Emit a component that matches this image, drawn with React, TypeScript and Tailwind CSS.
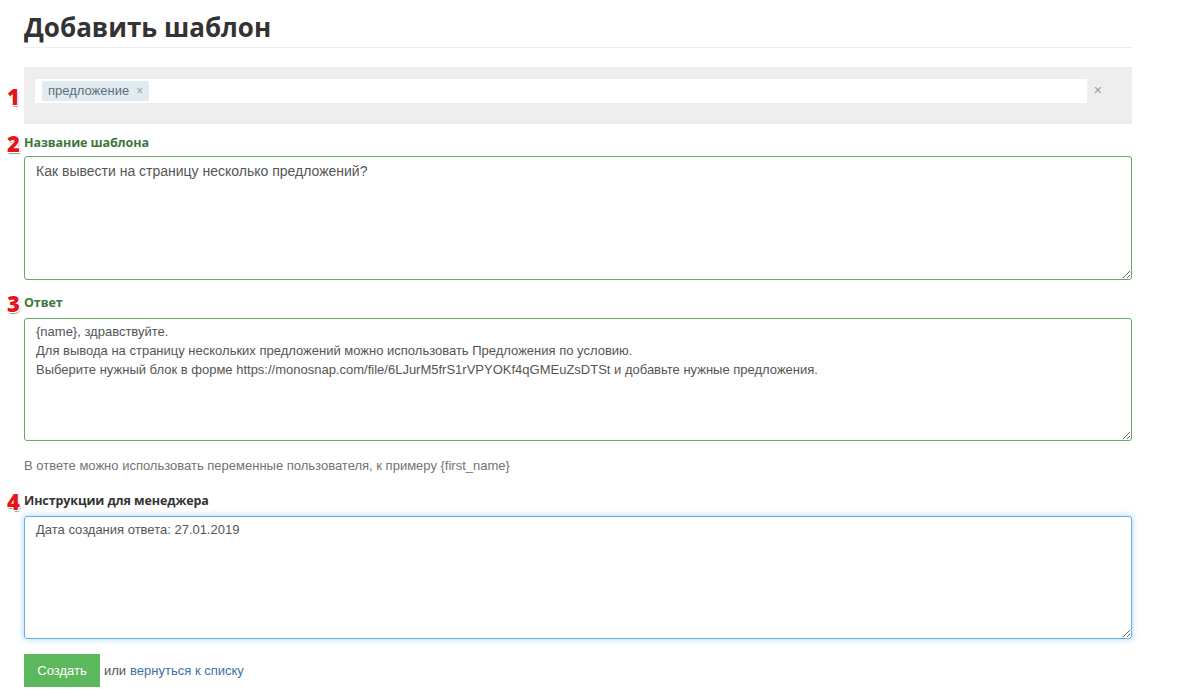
import React from "react";

const body = "font-['Liberation_Sans',Arial,sans-serif]";
const heading = "font-['Open_Sans','Liberation_Sans',sans-serif]";

function Marker({ n }: { n: string }) {
  return (
    <span
      className={`absolute -left-[17px] top-1/2 -translate-y-1/2 text-[22px] font-extrabold leading-none text-[#e3141b] ${heading}`}
      style={{ textShadow: "1px 1px 0 #fff, -1px -1px 0 #fff, 1px -1px 0 #fff, -1px 1px 0 #fff, 1px 2px 1px #999" }}
    >
      {n}
    </span>
  );
}

function Label({ n, children, tone }: { n: string; children: React.ReactNode; tone: "green" | "dark" }) {
  return (
    <div className="relative h-[20px] flex items-center">
      <Marker n={n} />
      <span
        className={`text-[12.5px] font-bold tracking-[-0.1px] ${heading} ${tone === "green" ? "text-[#3c763d]" : "text-[#333]"}`}
      >
        {children}
      </span>
    </div>
  );
}

export default function App() {
  return (
    <div className={`min-h-[698px] bg-white ${body}`}>
      <div className="ml-[24px] w-[1108px] pt-[8px]">
        <h1 className={`text-[26px] font-bold text-[#333] leading-[38px] ${heading}`}>Добавить шаблон</h1>
        <div className="mt-[1px] border-b border-[#eee]" />

        {/* tags */}
        <div className="relative mt-[19px] h-[57px] bg-[#eee] pl-[11px] pr-[45px] pt-[12px]">
          <Marker n="1" />
          <div className="h-[24px] bg-white flex items-center px-[7px]">
            <span className="flex items-center gap-[7px] h-[20px] rounded-[2px] bg-[#e1ebf2] px-[6px] text-[13px] text-[#5f6f7b]">
              предложение
              <span className="text-[12px] text-[#999]">×</span>
            </span>
          </div>
          <span className="absolute right-[30px] top-[13px] text-[14px] text-[#999]">×</span>
        </div>

        <div className="mt-[9px]">
          <Label n="2" tone="green">Название шаблона</Label>
          <textarea
            className="mt-[3px] block w-full h-[124px] rounded-[3px] border border-[#6aa56a] px-[11px] py-[5px] text-[14px] leading-[19px] text-[#555] outline-none"
            defaultValue="Как вывести на страницу несколько предложений?"
          />
        </div>

        <div className="mt-[13px]">
          <Label n="3" tone="green">Ответ</Label>
          <textarea
            className="mt-[5px] block w-full h-[123px] rounded-[3px] border border-[#6aa56a] px-[11px] py-[3px] text-[13px] leading-[19px] text-[#555] outline-none"
            defaultValue={
              "{name}, здравствуйте.\nДля вывода на страницу нескольких предложений можно использовать Предложения по условию.\nВыберите нужный блок в форме https://monosnap.com/file/6LJurM5frS1rVPYOKf4qGMEuZsDTSt и добавьте нужные предложения."
            }
          />
        </div>

        <p className="mt-[15px] text-[13px] text-[#737373] leading-[19px]">
          В ответе можно использовать переменные пользователя, к примеру {"{first_name}"}
        </p>

        <div className="mt-[16px]">
          <Label n="4" tone="dark">Инструкции для менеджера</Label>
          <textarea
            className="mt-[5px] block w-full h-[123px] rounded-[3px] border border-[#66afe9] px-[11px] py-[3px] text-[13px] leading-[19px] text-[#555] outline-none shadow-[0_0_6px_rgba(102,175,233,0.6)]"
            defaultValue="Дата создания ответа: 27.01.2019"
          />
        </div>

        <div className="mt-[15px] flex items-center gap-[4px] text-[13px]">
          <button className="h-[33px] w-[76px] bg-[#5cb85c] text-white text-[13px]">Создать</button>
          <span className="text-[#555]">или</span>
          <a className="text-[#3d6fa8]" href="#">вернуться к списку</a>
        </div>
      </div>
    </div>
  );
}
